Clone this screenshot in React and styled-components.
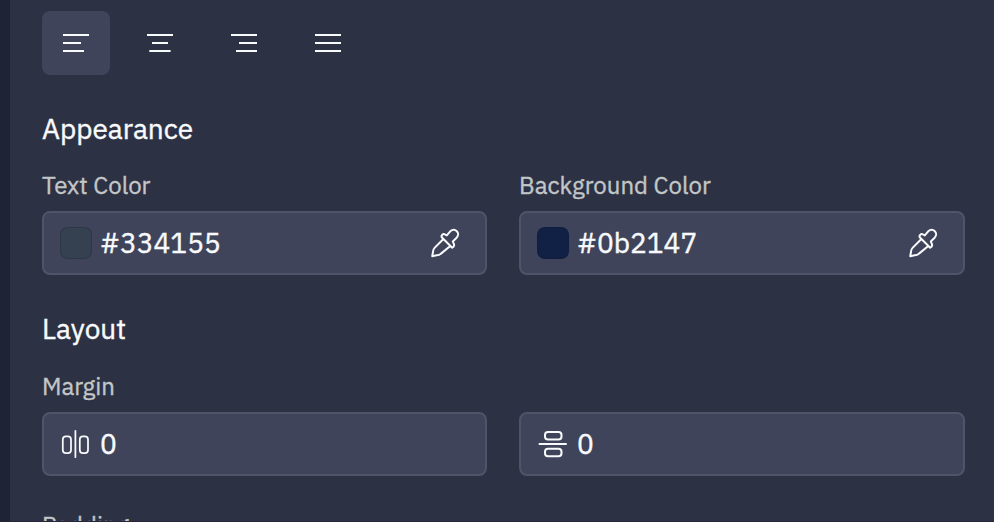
import React from "react";
import styled, { createGlobalStyle } from "styled-components";

const GlobalStyle = createGlobalStyle`
  *, *::before, *::after { box-sizing: border-box; }
  body { margin: 0; background: #2d3144; }
`;

const Shell = styled.div`
  display: flex;
  width: 100%;
  height: 522px;
  overflow: hidden;
  border-bottom: 1px solid #292539;
  background: #2d3144;
  color: #f8fafc;
  font-family: "IBM Plex Sans", Roboto, sans-serif;
`;

const Rail = styled.div`
  flex: 0 0 10px;
  background: #1e2433;
`;

const Panel = styled.main`
  flex: 1;
  min-width: 0;
  padding: 11px 29px 0 32px;
`;

const Toolbar = styled.div`
  display: flex;
  gap: 16px;
`;

const AlignButton = styled.button`
  display: grid;
  place-items: center;
  width: 68px;
  height: 64px;
  padding: 0;
  border: 0;
  border-radius: 8px;
  color: inherit;
  background: ${(p) => (p.$active ? "#40445a" : "transparent")};
`;

const Heading = styled.h2`
  height: 36px;
  margin: ${(p) => p.$top}px 0 0;
  font-size: 28px;
  font-weight: 400;
  line-height: 36px;
  -webkit-text-stroke: 0.4px currentColor;
`;

const Label = styled.div`
  height: 32px;
  color: #c2c6c7;
  font-size: 24px;
  line-height: 32px;
  white-space: nowrap;
  -webkit-text-stroke: 0.35px currentColor;
`;

const Grid = styled.div`
  display: grid;
  grid-template-columns: 445fr 446fr;
  column-gap: 32px;
  margin-top: ${(p) => p.$top}px;
`;

const Column = styled.div`
  display: flex;
  flex-direction: column;
  justify-content: flex-end;
`;

const Field = styled.div`
  display: flex;
  align-items: center;
  height: 64px;
  margin-top: 10px;
  padding: 0 24px 0 16px;
  border: 2px solid #505468;
  border-radius: 8px;
  background: #40445a;
`;

const Swatch = styled.span`
  flex: 0 0 32px;
  height: 32px;
  border: 1px solid rgba(20, 24, 38, 0.25);
  border-radius: 8px;
  background: ${(p) => p.$color};
`;

const Value = styled.span`
  flex: 1;
  margin-left: 8px;
  font-size: 28px;
  line-height: 36px;
  -webkit-text-stroke: 0.4px currentColor;
`;

const Icon = styled.svg`
  display: block;
  flex: none;
  fill: none;
  stroke: currentColor;
  stroke-width: ${(p) => p.$weight || 2};
  stroke-linejoin: round;
  stroke-linecap: ${(p) => p.$cap || "round"};
`;

const AlignIcon = ({ d }) => (
  <Icon width="32" height="32" viewBox="0 0 32 32" $cap="butt">
    <path d={d} />
  </Icon>
);

const Dropper = () => (
  <Icon width="32" height="32" viewBox="0 0 32 32">
    <path d="M13.2 10.8 23.2 20.8M14.4 12 5.8 20.6C4.4 22 3.9 23 4 25L3.2 29.2 7.8 28.3C9.6 28.3 10.8 27.8 12 26.6L21.6 18.8M13.2 10.8C11.4 9 14 5.8 16.2 7.6L17.8 8.4 21 4.6C26 0 32 6.2 27.6 10.8L23.8 14.4 24.4 16C26.2 18.6 24 21.8 21.6 19.6" />
  </Icon>
);

const HorizontalMargin = () => (
  <Icon width="32" height="32" viewBox="0 0 32 32" $weight={1.75}>
    <path d="M15.4 2.8v26.4" />
    <rect x="2.8" y="8.4" width="8.2" height="16.8" rx="3.2" />
    <rect x="19.8" y="8.4" width="8.2" height="16.8" rx="3.2" />
  </Icon>
);

const VerticalMargin = () => (
  <Icon width="32" height="32" viewBox="0 0 32 32">
    <path d="M2.5 16h26.5" />
    <rect x="8" y="4" width="16.5" height="7.5" rx="3" />
    <rect x="8" y="20.7" width="16.5" height="7.5" rx="3" />
  </Icon>
);

const alignments = [
  ["Align left", "M3 8h26M3 16h18M3 24h21"],
  ["Align center", "M3 8h26M8 16h16M5.3 24h21.3"],
  ["Align right", "M3 8h26M11 16h18M8 24h21"],
  ["Justify", "M3 8h26M3 16h26M3 24h26"],
];

export default function App() {
  return (
    <>
      <GlobalStyle />
      <Shell>
        <Rail />
        <Panel>
          <Toolbar>
            {alignments.map(([name, d], i) => (
              <AlignButton key={name} aria-label={name} $active={i === 0}>
                <AlignIcon d={d} />
              </AlignButton>
            ))}
          </Toolbar>
          <Heading $top={36}>Appearance</Heading>
          <Grid $top={22}>
            <Column>
              <Label>Text Color</Label>
              <Field>
                <Swatch $color="#354050" />
                <Value>#334155</Value>
                <Dropper />
              </Field>
            </Column>
            <Column>
              <Label>Background Color</Label>
              <Field>
                <Swatch $color="#112045" />
                <Value>#0b2147</Value>
                <Dropper />
              </Field>
            </Column>
          </Grid>
          <Heading $top={36}>Layout</Heading>
          <Grid $top={23}>
            <Column>
              <Label>Margin</Label>
              <Field>
                <HorizontalMargin />
                <Value>0</Value>
              </Field>
            </Column>
            <Column>
              <Field>
                <VerticalMargin />
                <Value>0</Value>
              </Field>
            </Column>
          </Grid>
          <Grid $top={33}>
            <Label>Padding</Label>
          </Grid>
        </Panel>
      </Shell>
    </>
  );
}
